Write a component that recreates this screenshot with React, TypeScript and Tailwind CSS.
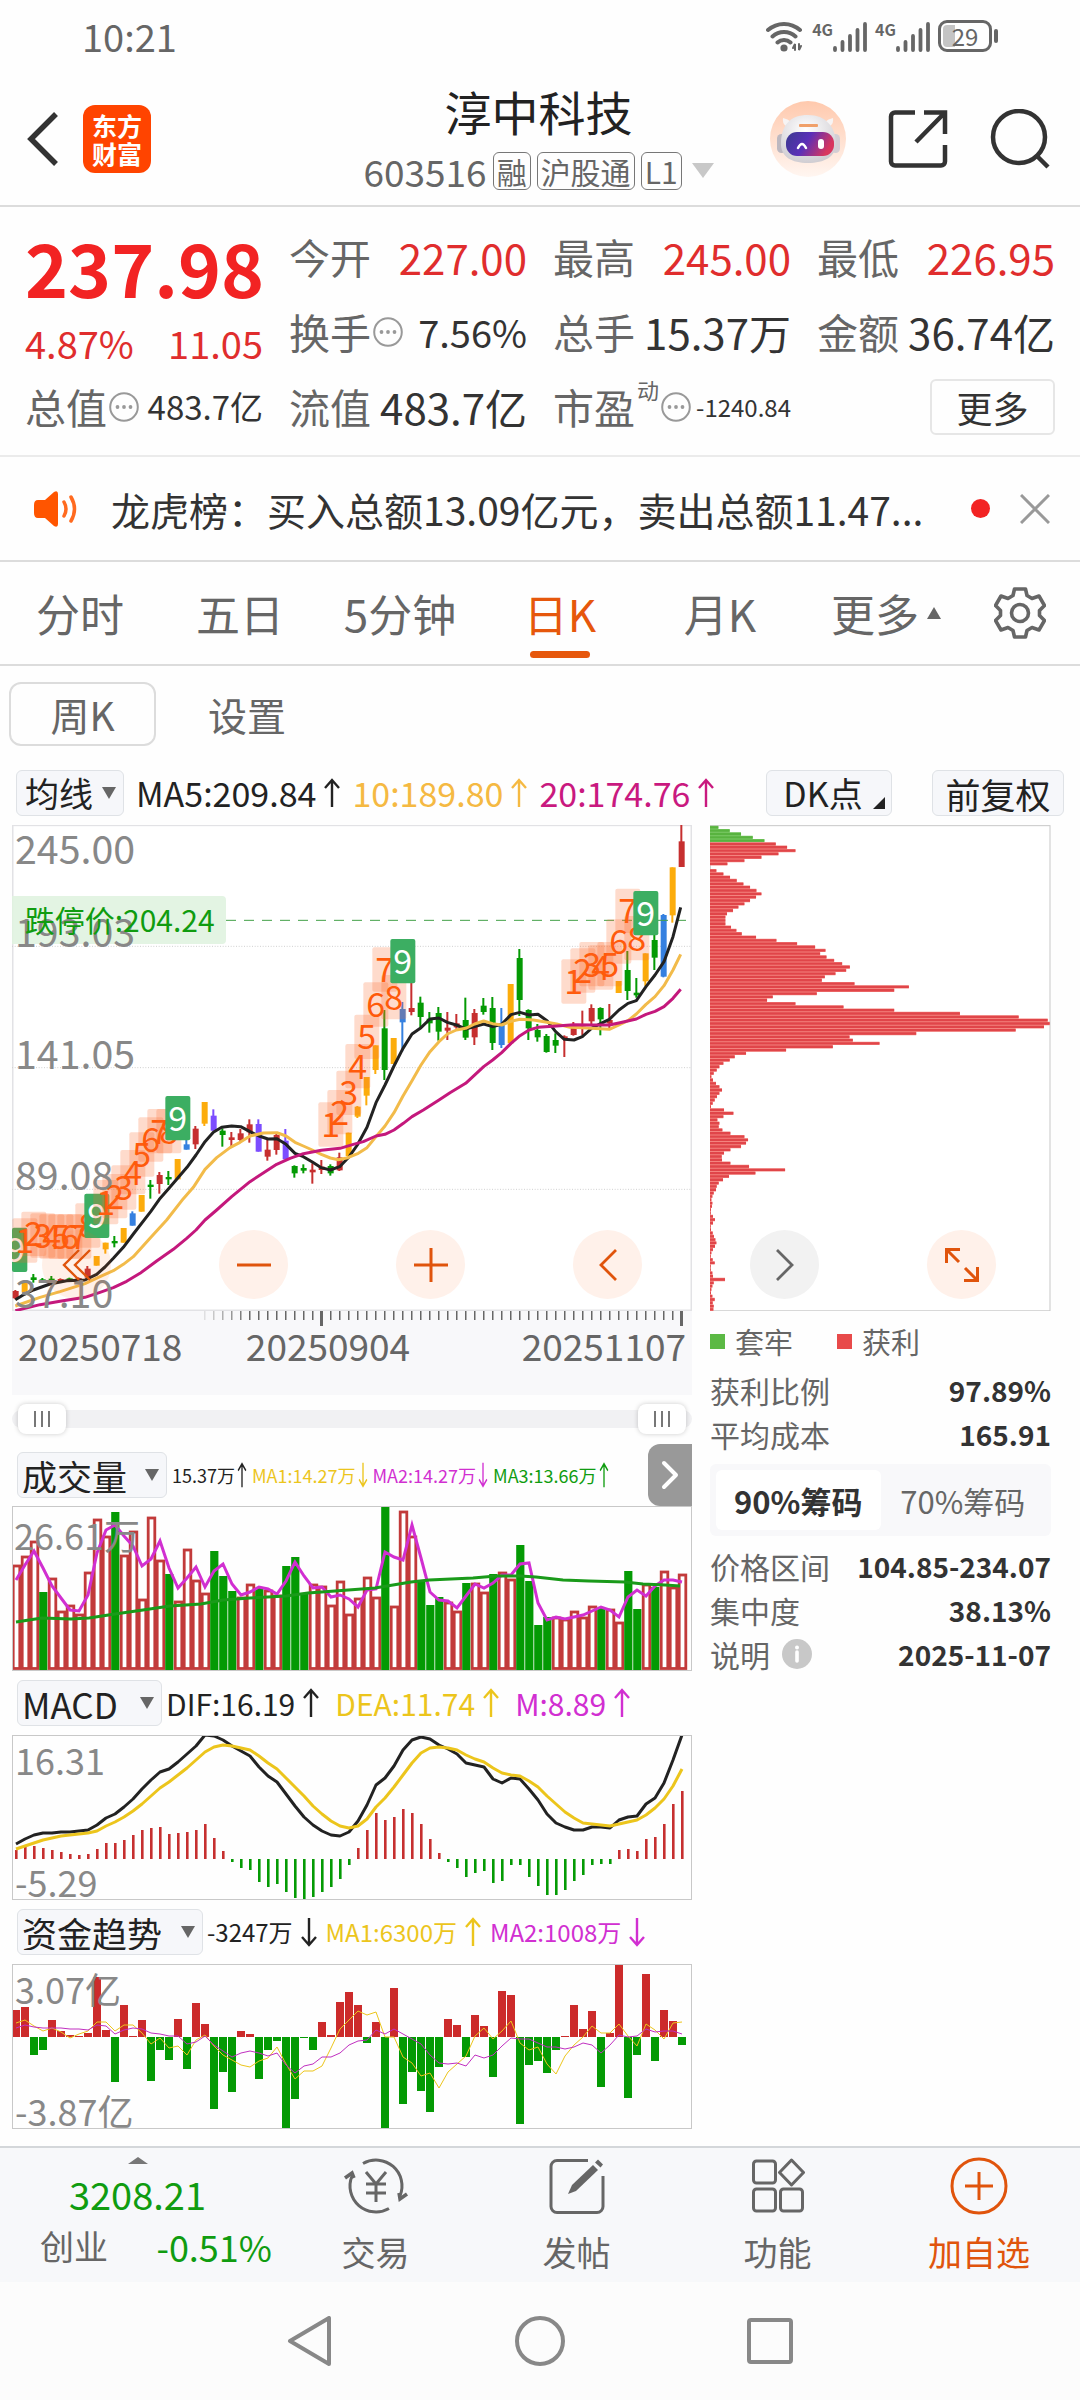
import { useState, type ReactNode } from 'react';
import clsx from 'clsx';

// candle: [kind, body top, body bottom, wick top, wick bottom]
type Kind = 'r' | 'g' | 'y' | 'b' | 'p';
type Candle = [Kind, number, number, number, number];

const kindFill: Record<Kind, string> = {
  r: '#c62f2f',
  g: '#049a04',
  y: '#fcac0c',
  b: '#3580e0',
  p: '#7c4dff',
};

const candles: Candle[] = [
  ['r', 1443, 1465, 1440, 1468], ['y', 1418, 1446, 1418, 1446], ['g', 1402, 1410, 1392, 1418], ['g', 1408, 1414, 1404, 1416],
  ['g', 1406, 1413, 1398, 1416], ['r', 1407, 1413, 1405, 1415], ['g', 1405, 1412, 1403, 1414], ['r', 1404, 1410, 1402, 1412],
  ['r', 1376, 1403, 1368, 1406], ['y', 1338, 1367, 1338, 1367], ['y', 1298, 1318, 1298, 1331], ['g', 1293, 1300, 1278, 1312],
  ['y', 1254, 1298, 1254, 1298], ['b', 1210, 1247, 1204, 1247], ['y', 1155, 1205, 1155, 1205], ['g', 1124, 1131, 1110, 1166],
  ['r', 1095, 1122, 1086, 1151], ['g', 1101, 1108, 1083, 1125], ['y', 1047, 1108, 1047, 1108], ['b', 1003, 1019, 985, 1019],
  ['r', 956, 1003, 948, 1017], ['y', 876, 941, 876, 948], ['p', 917, 962, 898, 962], ['g', 962, 975, 955, 1010],
  ['r', 982, 990, 966, 1010], ['r', 970, 990, 957, 998], ['r', 943, 967, 928, 998], ['p', 942, 1025, 928, 1025],
  ['r', 1019, 1040, 990, 1052], ['r', 975, 1020, 970, 1034], ['p', 992, 1048, 957, 1048], ['g', 1068, 1090, 1066, 1103],
  ['g', 1074, 1082, 1063, 1090], ['r', 1079, 1087, 1060, 1121], ['r', 1070, 1080, 1050, 1092], ['g', 1068, 1090, 1063, 1097],
  ['r', 1042, 1081, 1028, 1083], ['y', 968, 1038, 968, 1038], ['y', 890, 920, 888, 924], ['y', 801, 857, 801, 886],
  ['y', 706, 780, 706, 792], ['g', 655, 780, 600, 810], ['y', 684, 762, 684, 762], ['b', 597, 637, 576, 724],
  ['r', 594, 606, 515, 616], ['g', 578, 621, 560, 652], ['g', 626, 640, 606, 668], ['g', 609, 665, 591, 692],
  ['r', 653, 662, 606, 690], ['r', 640, 652, 612, 656], ['g', 630, 683, 563, 690], ['r', 609, 682, 597, 705],
  ['g', 587, 606, 564, 614], ['g', 594, 699, 561, 720], ['b', 640, 705, 594, 714], ['y', 522, 700, 522, 700],
  ['g', 444, 570, 417, 618], ['g', 600, 655, 598, 690], ['g', 660, 682, 642, 695], ['g', 678, 726, 672, 728],
  ['g', 690, 707, 670, 729], ['r', 679, 685, 676, 741], ['r', 645, 675, 636, 677], ['r', 650, 656, 602, 676],
  ['r', 594, 634, 583, 645], ['g', 594, 628, 592, 676], ['r', 630, 640, 582, 655], ['y', 513, 549, 513, 549],
  ['g', 480, 543, 423, 570], ['g', 548, 556, 504, 563], ['y', 430, 514, 430, 528], ['g', 390, 443, 370, 480],
  ['b', 315, 500, 312, 502], ['y', 172, 316, 172, 338], ['r', 94, 171, 45, 171],
];

const ma5 =
  '46,1469 73,1453 100,1440 150,1422 200,1412 255,1410 290,1393 315,1371 340,1345 370,1312 400,1272 452,1205 478,1168 507,1135 534,1103 561,1072 588,1035 615,995 640,967 665,952 695,948 722,950 750,965 777,978 804,987 831,986 858,1003 885,1030 910,1040 937,1056 964,1073 991,1080 1019,1070 1046,1042 1072,1005 1101,952 1128,878 1155,825 1182,768 1209,715 1236,672 1263,653 1290,627 1317,624 1342,637 1369,645 1397,657 1424,650 1451,642 1478,650 1505,643 1533,614 1560,607 1587,615 1614,613 1641,632 1667,665 1693,688 1722,690 1747,680 1776,654 1803,640 1828,628 1857,600 1884,580 1909,572 1938,530 1965,495 1992,455 2019,380 2042,292';
const ma10 =
  '46,1488 120,1462 180,1445 255,1421 300,1400 340,1382 370,1363 400,1340 450,1285 500,1230 550,1166 580,1132 615,1078 650,1043 690,1013 720,997 750,978 790,969 831,968 858,978 885,997 910,1008 937,1020 964,1033 991,1044 1015,1049 1040,1044 1075,1030 1101,1013 1128,980 1155,948 1182,908 1209,858 1236,812 1263,765 1290,725 1317,695 1342,672 1369,660 1397,655 1424,642 1451,633 1478,641 1505,645 1533,634 1560,628 1600,630 1641,637 1670,642 1710,652 1747,653 1800,656 1828,658 1857,645 1884,632 1909,612 1938,583 1965,560 1992,527 2019,480 2042,433';
const ma20 =
  '46,1502 120,1484 180,1474 255,1462 300,1447 340,1433 380,1414 420,1390 470,1353 520,1318 560,1285 588,1260 615,1230 650,1200 695,1160 750,1115 800,1082 830,1063 870,1045 910,1031 964,1021 1020,1015 1060,1003 1090,995 1128,978 1155,973 1182,960 1210,940 1236,920 1270,900 1317,870 1350,848 1397,820 1451,770 1478,750 1505,728 1533,700 1560,677 1587,660 1614,652 1670,648 1722,644 1780,645 1828,645 1860,638 1909,627 1938,613 1965,604 1992,590 2019,565 2042,538';

// nine-turn counts: first candle index and the top of each box
const turns: { start: number; tops: number[] }[] = [
  { start: 1, tops: [1225, 1205, 1210, 1213, 1213, 1213, 1213, 1180, 1151] },
  { start: 10, tops: [1110, 1092, 1066, 1020, 967, 922, 897, 897, 858] },
  { start: 35, tops: [877, 840, 782, 702, 614, 517, 412, 495, 387] },
  { start: 62, tops: [448, 415, 396, 406, 396, 328, 236, 318, 243] },
];

const chips = [
  87, 121, 155, 190, 225, 259, 293, 318, 267, 216, 165, 114, 62, 81, 102, 122, 142, 162, 182, 201, 216, 200, 182, 165, 147,
  131, 113, 108, 108, 108, 125, 141, 157, 200, 261, 323, 377, 408, 392, 411, 434, 458, 481, 470, 438, 406, 397, 495, 658,
  614, 382, 250, 233, 318, 462, 614, 811, 987, 1074, 1080, 1063, 978, 680, 480, 490, 570, 430, 290, 170, 136, 121, 102, 90,
  82, 73, 66, 71, 80, 90, 98, 90, 83, 76, 70, 65, 104, 132, 102, 84, 90, 88, 99, 123, 165, 176, 170, 155, 123, 104, 97, 98,
  123, 179, 287, 198, 119, 101, 88, 82, 80, 73, 69, 66, 69, 68, 65, 64, 71, 77, 71, 64, 65, 70, 74, 78, 81, 77, 71, 66, 64,
  70, 76, 64, 64, 69, 71, 107, 73, 69, 66, 65, 69, 76, 70, 73, 72,
];

// positive bars closed up, negative bars closed down
const volume = [
  104, 113, 128, -78, 91, 58, 64, 55, 97, 150, 133, -158, 114, 138, 70, 152, 109, -96, 68, 120, 89, 76, -119, -94, -79, 72,
  85, -82, 79, 74, -104, -113, -77, 85, 83, 64, 88, 55, 71, 92, 72, -163, 63, 158, 133, -90, -65, -73, 67, 58, -87, 86, 77,
  -96, 97, 90, -125, -89, -45, -53, 52, 50, 58, 52, 63, -62, 60, 47, -99, -61, 85, -83, 98, 82, 95,
];
const volumeMa = [
  74, 59, 45, 62, 80, 92, 104, 105, 89, 47, 24, 19, 30, 40, 60, 53, 35, 62, 82, 72, 61, 81, 65, 58, 78, 89, 86, 81, 83, 88,
  75, 56, 70, 82, 81, 91, 89, 93, 101, 84, 83, 46, 51, 54, 19, 52, 86, 94, 95, 102, 90, 78, 82, 77, 69, 69, 58, 57, 97, 114,
  111, 113, 111, 109, 105, 101, 104, 111, 91, 84, 90, 80, 74, 74, 76,
];
const volumeTrend =
  '4,116 30,112 59,113 77,112 103,108 131,104 158,100 189,98 211,94 238,92 274,90 296,87 323,85 363,82 399,76 417,74 461,72 484,70 508,70 524,71 551,74 577,75 613,76 631,78 653,79 668,80';

const macd = [
  9, 12, 13, 11, 9, 7, 5, 4, 5, 10, 16, 16, 19, 24, 29, 31, 32, 25, 26, 27, 29, 35, 21, 8, -3, -9, -11, -23, -28, -25, -33,
  -39, -41, -38, -33, -28, -20, -6, 11, 29, 46, 39, 42, 50, 46, 35, 20, 6, -3, -9, -18, -14, -12, -24, -22, -6, -6, -18,
  -27, -36, -36, -31, -22, -16, -6, -5, -5, 9, 10, 8, 20, 22, 35, 55, 68,
];
const dif = [
  109, 104, 100, 98, 98, 97, 97, 96, 95, 90, 83, 79, 72, 64, 54, 45, 37, 34, 27, 19, 11, 0, 1, 5, 11, 16, 21, 32, 41, 47,
  59, 71, 82, 90, 96, 100, 101, 97, 86, 70, 50, 43, 31, 15, 5, 2, 4, 10, 14, 19, 28, 30, 32, 44, 48, 43, 44, 54, 65, 79, 88,
  92, 95, 95, 92, 92, 93, 85, 82, 81, 69, 63, 48, 25, 0,
];
const dea = [
  114, 111, 108, 105, 103, 101, 100, 99, 98, 96, 91, 87, 82, 76, 69, 61, 53, 47, 40, 33, 25, 17, 12, 10, 11, 13, 15, 21, 28,
  34, 43, 52, 61, 71, 79, 86, 91, 93, 91, 84, 72, 63, 52, 40, 28, 18, 13, 12, 13, 15, 20, 24, 27, 33, 38, 40, 41, 46, 52,
  61, 69, 77, 83, 88, 89, 90, 91, 89, 87, 85, 80, 73, 64, 51, 34,
];

const funds = [
  27, 30, -18, -13, 17, 6, 2, 1, 4, 60, 7, -45, 32, 1, 17, -44, -13, -23, 18, -32, 34, 13, -72, -35, -55, 6, 3, -42, -13,
  -4, -91, -62, -1, -13, 15, 2, 35, 45, 32, -6, 15, -92, 49, -67, -35, -54, -75, -30, 18, 12, -20, 22, 11, -40, 46, 42, -87,
  -28, -24, -36, -13, 1, 32, 8, 26, -50, 4, 73, -61, -18, 63, -24, 27, 16, -8,
];
const fundsMa1 = [
  59, 56, 62, 67, 64, 68, 74, 70, 67, 58, 58, 67, 61, 61, 69, 80, 74, 84, 82, 91, 76, 71, 82, 91, 96, 101, 103, 97, 94, 83,
  100, 115, 107, 107, 102, 84, 65, 56, 47, 51, 48, 73, 73, 93, 99, 112, 109, 124, 108, 100, 92, 72, 64, 75, 67, 57, 79, 86,
  83, 100, 110, 92, 81, 73, 62, 69, 69, 60, 72, 82, 60, 66, 75, 59, 58,
];
const fundsMa2 = [
  64, 61, 63, 64, 64, 64, 65, 65, 66, 61, 62, 70, 66, 64, 65, 69, 70, 72, 72, 80, 78, 72, 81, 87, 93, 89, 87, 89, 92, 89,
  101, 109, 102, 100, 93, 93, 89, 81, 77, 76, 66, 70, 65, 70, 75, 80, 91, 99, 100, 99, 102, 91, 94, 91, 82, 74, 75, 75, 79,
  83, 83, 85, 83, 79, 81, 89, 81, 71, 73, 72, 65, 68, 67, 67, 70,
];

const toPoints = (ys: number[]) => ys.map((y, i) => `${4 + i * 9},${y}`).join(' ');

function Triangle({ up, className }: { up?: boolean; className?: string }) {
  return (
    <svg viewBox="0 0 14 12" className={clsx('w-3.5 shrink-0', className)} fill="currentColor" aria-hidden="true">
      <path d={up ? 'M7 0l7 12H0z' : 'M0 0h14L7 12z'} />
    </svg>
  );
}

function Arrow({ down, small }: { down?: boolean; small?: boolean }) {
  return (
    <svg
      viewBox="0 0 18 30"
      className={clsx('shrink-0', small ? 'h-[26px] w-[10px]' : 'h-[30px] w-[18px]')}
      preserveAspectRatio="none"
      fill="none"
      stroke="currentColor"
      strokeWidth="2.4"
      aria-label={down ? '下降' : '上升'}
    >
      <path d={down ? 'M9 1v27M2 20l7 8 7-8' : 'M9 29V2M2 10l7-8 7 8'} />
    </svg>
  );
}

function Dots() {
  return (
    <svg viewBox="0 0 30 30" className="w-[30px] shrink-0" aria-hidden="true">
      <circle cx="15" cy="15" r="13.8" fill="none" stroke="#999" strokeWidth="2" />
      <g fill="#999">
        <circle cx="8.500" cy="15" r="1.9" />
        <circle cx="15" cy="15" r="1.9" />
        <circle cx="21.500" cy="15" r="1.9" />
      </g>
    </svg>
  );
}

function Picker({ label, options, className }: { label: string; options: string[]; className: string }) {
  return (
    <label className="relative flex shrink-0 items-center text-[#666]">
      <select
        aria-label={label}
        className={clsx('h-[46px] appearance-none rounded-md border border-[#dfe2e6] bg-[#f6f7fa] text-[#222]', className)}
      >
        {options.map(o => (
          <option key={o}>{o}</option>
        ))}
      </select>
      <Triangle className="pointer-events-none absolute right-2" />
    </label>
  );
}

function Signal() {
  return (
    <div className="flex items-start">
      <span className="text-[16px] leading-none font-bold">4G</span>
      <svg viewBox="0 0 34 30" className="mt-px w-[34px]" stroke="#666" strokeWidth="3.8" strokeLinecap="round">
        <path d="M2 26v2M9.500 20v8M17 14v14M24.500 8v20M32 2v26" />
      </svg>
    </div>
  );
}

function StatusBar() {
  return (
    <div className="flex h-18 items-center justify-between px-[82px] text-[#666]">
      <span className="text-[38px] leading-none">10:21</span>
      <div className="flex items-center gap-2">
        <svg viewBox="0 0 38 32" className="w-[38px]" fill="none" stroke="#666" strokeWidth="4" strokeLinecap="round" aria-label="WiFi">
          <path d="M2 10a24 24 0 0 1 32 0M6.500 16.500a17 17 0 0 1 23 0M11.500 22.500a9.500 9.500 0 0 1 13 0" />
          <circle cx="18" cy="28" r="1.6" fill="#666" />
          <path d="M27 28l2-4v6M35 26l-2 4v-6" strokeWidth="2" />
        </svg>
        <Signal />
        <Signal />
        <div className="flex items-center gap-[2px]">
          <div className="relative flex h-8 w-[54px] items-center justify-center overflow-hidden rounded-[9px] border-[3px] border-[#666]">
            <div className="absolute inset-y-[2px] left-[2px] w-3 rounded-l bg-[#c4c4c4]" />
            <span className="relative text-[24px] leading-none">29</span>
          </div>
          <div className="h-[14px] w-[4px] rounded bg-[#666]" />
        </div>
      </div>
    </div>
  );
}

function Robot() {
  return (
    <svg viewBox="0 0 76 76" className="w-[76px]" aria-hidden="true">
      <defs>
        <linearGradient id="halo" x1="0" y1="0" x2="0" y2="1">
          <stop offset="0" stopColor="#ffc9ad" />
          <stop offset="1" stopColor="#fff6f1" />
        </linearGradient>
        <linearGradient id="visor" x1="0" y1="0" x2="1" y2="0.3">
          <stop offset="0" stopColor="#3b3a8f" />
          <stop offset="0.5" stopColor="#5a2fb8" />
          <stop offset="1" stopColor="#d8365e" />
        </linearGradient>
        <radialGradient id="shell" cx="0.45" cy="0.3" r="0.8">
          <stop offset="0" stopColor="#ffffff" />
          <stop offset="1" stopColor="#c9c6cc" />
        </radialGradient>
      </defs>
      <circle cx="38" cy="38" r="38" fill="url(#halo)" />
      <path d="M16 25q-4-3-3-8 5 1 8 4zM60 25q4-3 3-8-5 1-8 4z" fill="#f7f4f4" />
      <rect x="7" y="33" width="9" height="19" rx="4.500" fill="#bdb8c0" />
      <rect x="61" y="33" width="9" height="19" rx="4.500" fill="#d3ced4" />
      <path d="M38 14c18 0 27 12 28 27 1 15-12 21-28 21S10 56 11 41c1-17 9-27 27-27z" fill="url(#shell)" />
      <rect x="16" y="31" width="48" height="24" rx="11" fill="url(#visor)" />
      <path d="M28 47q4-8 8 0" fill="none" stroke="#fff" strokeWidth="2.500" strokeLinecap="round" />
      <rect x="48" y="38" width="6" height="10" rx="3" fill="#fff" />
      <rect x="29" y="23" width="19" height="3" rx="1" fill="#f0a06a" />
    </svg>
  );
}

function Header() {
  return (
    <header className="grid h-[135px] grid-cols-[1fr_auto_1fr] items-center border-b-2 border-[#dcdcdc] pr-[30px] pl-[27px]">
      <div className="flex items-center gap-6">
        <button aria-label="返回">
          <svg viewBox="0 0 32 54" className="w-8" fill="none" stroke="#333" strokeWidth="5.500">
            <path d="M29 2L4 27l25 25" />
          </svg>
        </button>
        <a href="#home" className="flex size-17 flex-col items-center justify-center rounded-xl bg-[#ff4400] text-[25px] leading-[28px] font-bold text-white">
          <span>东方</span>
          <span>财富</span>
        </a>
      </div>
      <div className="flex flex-col items-center gap-1">
        <h1 className="text-[47px] leading-[60px] text-[#222]">淳中科技</h1>
        <button className="flex items-center gap-[6px] text-[#666]">
          <span className="text-[37px] leading-[52px]">603516</span>
          {['融', '沪股通', 'L1'].map(tag => (
            <span key={tag} className="rounded-md border border-[#777] px-[3px] text-[30px] leading-[36px]">
              {tag}
            </span>
          ))}
          <svg viewBox="0 0 22 15" className="ml-1 w-[22px]" fill="#c8c8c8" aria-hidden="true">
            <path d="M0 0h22L11 15z" />
          </svg>
        </button>
      </div>
      <div className="flex items-center justify-end gap-[42px]">
        <button aria-label="智能助手">
          <Robot />
        </button>
        <button aria-label="分享">
          <svg viewBox="0 0 60 60" className="w-[60px]" fill="none" stroke="#333" strokeWidth="4.500">
            <path d="M27 3.500H7a4 4 0 0 0-4 4v45a4 4 0 0 0 4 4h46a4 4 0 0 0 4-4V36M36 3.500h21V25M57 3.500L28 33" />
          </svg>
        </button>
        <button aria-label="搜索">
          <svg viewBox="0 0 60 60" className="w-[60px]" fill="none" stroke="#333" strokeWidth="4.500">
            <circle cx="29" cy="28" r="26" />
            <path d="M47 47l11 11" />
          </svg>
        </button>
      </div>
    </header>
  );
}

function Stat({ label, value, extra, size = 'text-[42px]' }: { label: string; value: string; extra?: ReactNode; size?: string }) {
  return (
    <div className="flex items-center justify-between whitespace-nowrap">
      <div className="flex items-center gap-[2px] text-[41px] leading-none text-[#666]">
        {label}
        {extra}
      </div>
      <span className={clsx('leading-none', size)}>{value}</span>
    </div>
  );
}

function Quote() {
  return (
    <section className="grid grid-cols-4 grid-rows-[75px_75px_75px] gap-x-[26px] border-b-2 border-[#ebebeb] px-[25px] pt-3 pb-[11px] text-[#333]">
      <div className="row-span-2 text-[#e02d2d]">
        <div className="text-[73px] leading-[94px] font-bold text-[#f22323]">237.98</div>
        <div className="flex justify-between text-[38px] leading-[60px]">
          <span>4.87%</span>
          <span>11.05</span>
        </div>
      </div>
      <Stat label="今开" value="227.00" size="text-[42px] text-[#e02d2d]" />
      <Stat label="最高" value="245.00" size="text-[42px] text-[#e02d2d]" />
      <Stat label="最低" value="226.95" size="text-[42px] text-[#e02d2d]" />
      <Stat label="换手" value="7.56%" extra={<Dots />} size="text-[38px]" />
      <Stat label="总手" value="15.37万" />
      <Stat label="金额" value="36.74亿" />
      <Stat label="总值" value="483.7亿" extra={<Dots />} size="text-[33px]" />
      <Stat label="流值" value="483.7亿" />
      <Stat
        label="市盈"
        value="-1240.84"
        size="text-[24px]"
        extra={
          <>
            <span className="-mt-9 text-[22px]">动</span>
            <Dots />
          </>
        }
      />
      <button className="h-14 w-[125px] place-self-center justify-self-end rounded-md border-2 border-[#e6e6e6] text-[36px] leading-none">
        更多
      </button>
    </section>
  );
}

function NewsBar() {
  return (
    <section className="flex h-[105px] items-center border-b-2 border-[#dcdcdc] pr-[30px] pl-[34px]">
      <svg viewBox="0 0 44 36" className="w-11 shrink-0" aria-hidden="true">
        <path d="M4 9h7L20 1q4-2 4 2v30q0 4-4 2l-9-8H4q-4 0-4-5v-8q0-5 4-5z" fill="#ff5500" />
        <path d="M30 11q4 7 0 14M37 6q7 12 0 24" fill="none" stroke="#ff6a1f" strokeWidth="3.500" strokeLinecap="round" />
      </svg>
      <a href="#news" className="ml-[33px] min-w-0 flex-1 truncate text-[39px] leading-[52px] text-[#333]">
        龙虎榜：买入总额13.09亿元，卖出总额11.47...
      </a>
      <span className="ml-6 size-[19px] rounded-full bg-[#f22323]" />
      <button aria-label="关闭" className="ml-[30px]">
        <svg viewBox="0 0 30 30" className="w-[30px]" stroke="#999" strokeWidth="3">
          <path d="M1 1l28 28M29 1L1 29" />
        </svg>
      </button>
    </section>
  );
}

const periods = ['分时', '五日', '5分钟', '日K', '月K', '更多'];

function Periods() {
  const [active, setActive] = useState('日K');
  return (
    <nav className="grid h-[104px] grid-cols-[repeat(6,4fr)_3fr] border-b-2 border-[#dcdcdc] text-[#666]">
      {periods.map(p => (
        <button
          key={p}
          onClick={() => setActive(p)}
          className={clsx(
            'relative flex items-center justify-center gap-2 text-[44px] leading-none whitespace-nowrap',
            p === active && 'text-[#e6570c]',
            p === '更多' && 'pl-3',
          )}
        >
          {p}
          {p === '更多' && <Triangle up />}
          {p === active && <span className="absolute bottom-[6px] h-[7px] w-15 rounded-sm bg-[#e6570c]" />}
        </button>
      ))}
      <button aria-label="图表设置" className="flex items-center justify-center">
        <svg viewBox="0 0 52 52" className="w-13" fill="none" stroke="#666" strokeWidth="3.600" strokeLinejoin="round">
          <path d="M20.500 2h11l1.500 6.500 5 3 7-2.500 5.500 9.500-5 5v5l5 5-5.500 9.500-7-2.500-5 3L31.500 50h-11L19 43.500l-5-3L7 43l-5.500-9.500 5-5v-5l-5-5L7 9l7 2.500 5-3z" />
          <circle cx="26" cy="26" r="8.500" />
        </svg>
      </button>
    </nav>
  );
}

function Reading({ color, children, down }: { color: string; children: ReactNode; down?: boolean }) {
  return (
    <span className={clsx('flex items-center gap-[7px] whitespace-nowrap', color)}>
      {children}
      <Arrow down={down} />
    </span>
  );
}

function MaRow() {
  return (
    <div className="mt-6 flex h-[46px] items-center pr-4 pl-4 text-[34px] leading-none">
      <Picker label="主图指标" options={['均线', '布林']} className="w-[108px] pl-2 text-[34px]" />
      <div className="ml-3 flex gap-[11px]">
        <Reading color="text-[#222]">MA5:209.84</Reading>
        <Reading color="text-[#f5b942]">10:189.80</Reading>
        <Reading color="text-[#c9197f]">20:174.76</Reading>
      </div>
      <button className="relative ml-auto h-[46px] w-[126px] rounded-md border border-[#dfe2e6] bg-[#f6f7fa] pr-3 text-[#222]">
        DK点
        <svg viewBox="0 0 12 12" className="absolute right-[6px] bottom-[6px] w-3" fill="#222" aria-hidden="true">
          <path d="M12 0v12H0z" />
        </svg>
      </button>
      <button className="ml-10 h-[46px] w-[132px] rounded-md border border-[#dfe2e6] bg-[#f6f7fa] text-[35px] text-[#222]">前复权</button>
    </div>
  );
}

const circle = 'pointer-events-auto flex size-[69px] items-center justify-center rounded-full';

function KLine() {
  // x runs in thirds of a pixel, 27 per trading day
  const cx = (i: number) => 47 + i * 27;
  return (
    <div className="relative">
      <svg viewBox="36 45 2040 1458" className="block w-full" role="img" aria-label="日K线图">
        <rect x="38" y="46" width="2036" height="1455" fill="#fff" stroke="#e2e2e5" strokeWidth="5" />
        <g stroke="#cfcfcf" strokeWidth="3" strokeDasharray="3 5">
          <path d="M36 409H2074M36 773H2074M36 1138H2074" />
        </g>
        {candles.map(([kind, top, bottom, high, low], i) => (
          <g key={i} fill={kindFill[kind]}>
            <rect x={cx(i) - 4} y={high} width="6" height={low - high} />
            <rect x={cx(i) - 9} y={top} width="18" height={bottom - top} />
          </g>
        ))}
        <path d="M678 331H2060" stroke="#43a047" strokeWidth="3" strokeDasharray="30 24" />
        <g fill="none" strokeWidth="9" strokeLinejoin="round">
          <polyline points={ma5} stroke="#222" />
          <polyline points={ma10} stroke="#f2bb4a" />
          <polyline points={ma20} stroke="#c4187c" />
        </g>
        <g fontSize="102" textAnchor="middle">
          <rect x="36" y="1253" width="46" height="133" rx="6" fill="#3cae62" />
          <text x="47" y="1355" fill="#fff">9</text>
          {turns.map(({ start, tops }) =>
            tops.map((top, n) => (
              <g key={`${start}-${n}`}>
                <rect
                  x={cx(start + n) - 37}
                  y={top}
                  width="75"
                  height="133"
                  rx="6"
                  fill={n === 8 ? '#3cae62' : '#fc6a28'}
                  fillOpacity={n === 8 ? 1 : 0.24}
                />
                <text x={cx(start + n)} y={top + 104} fill={n === 8 ? '#fff' : '#ff5a0a'}>
                  {n + 1}
                </text>
              </g>
            )),
          )}
        </g>
        <path d="M36 258H666q12 0 12 12V390q0 12-12 12H36z" fill="#dff2df" fillOpacity="0.88" />
        <g fontSize="118" fill="#888">
          <text x="45" y="163">245.00</text>
          <text x="45" y="412">193.03</text>
          <text x="45" y="776">141.05</text>
          <text x="45" y="1140">89.08</text>
          <text x="45" y="1494">37.10</text>
        </g>
        <text x="74" y="366" fontSize="90" fill="#109c10">跌停价:204.24</text>
      </svg>
      <div className="pointer-events-none absolute right-[50px] bottom-3 left-[30px] flex justify-between text-[#e0540c]">
        <button aria-label="最早" className={clsx(circle, 'bg-[#ff6a1f]/10')}>
          <svg viewBox="0 0 30 32" className="w-[30px]" fill="none" stroke="currentColor" strokeWidth="2.400">
            <path d="M17 1L2 16l15 15M28 1L13 16l15 15" />
          </svg>
        </button>
        <button aria-label="缩小" className={clsx(circle, 'bg-[#fff1ea]')}>
          <svg viewBox="0 0 34 34" className="w-[34px]" stroke="currentColor" strokeWidth="3">
            <path d="M0 17h34" />
          </svg>
        </button>
        <button aria-label="放大" className={clsx(circle, 'bg-[#fff1ea]')}>
          <svg viewBox="0 0 34 34" className="w-[34px]" stroke="currentColor" strokeWidth="3">
            <path d="M0 17h34M17 0v34" />
          </svg>
        </button>
        <button aria-label="左移" className={clsx(circle, 'bg-[#fff1ea]')}>
          <svg viewBox="0 0 18 32" className="w-[18px]" fill="none" stroke="currentColor" strokeWidth="2.800">
            <path d="M17 1L2 16l15 15" />
          </svg>
        </button>
      </div>
    </div>
  );
}

function DateAxis() {
  const ticks = Array.from({ length: 54 }, (_, n) => n + 21);
  return (
    <div className="h-[84px] bg-[#f8f8fa] text-[37px] text-[#666]">
      <svg viewBox="0 0 680 16" className="block w-full" aria-hidden="true">
        {ticks.map(i => {
          const major = i === 34 || i === 74;
          return (
            <rect
              key={i}
              x={4 + i * 9 - (major ? 2 : 1)}
              y="0"
              width={major ? 3 : 1.5}
              height={major ? 15 : 9}
              fill="#666"
              opacity={i < 26 ? (i - 20) / 6 : 1}
            />
          );
        })}
      </svg>
      <div className="flex justify-between px-[6px] leading-[36px]">
        <span>20250718</span>
        <span className="mr-12">20250904</span>
        <span>20251107</span>
      </div>
    </div>
  );
}

const thumb =
  'pointer-events-none absolute inset-x-[6px] inset-y-0 m-0 appearance-none bg-transparent [&::-webkit-slider-thumb]:pointer-events-auto [&::-webkit-slider-thumb]:h-[30px] [&::-webkit-slider-thumb]:w-12 [&::-webkit-slider-thumb]:appearance-none [&::-webkit-slider-thumb]:rounded-lg [&::-webkit-slider-thumb]:bg-white [&::-webkit-slider-thumb]:bg-[linear-gradient(90deg,#777_0_2px,transparent_2px_7px,#777_7px_9px,transparent_9px_14px,#777_14px_16px)] [&::-webkit-slider-thumb]:bg-[length:16px_16px] [&::-webkit-slider-thumb]:bg-center [&::-webkit-slider-thumb]:bg-no-repeat [&::-webkit-slider-thumb]:shadow-[0_0_5px_rgba(0,0,0,0.2)]';

function RangeSlider() {
  return (
    <div className="relative mt-[9px] mb-[10px] flex h-[30px] items-center">
      <div className="h-[18px] w-full rounded-full bg-[#f1f1f3]" />
      <input type="range" aria-label="起始日期" defaultValue={0} className={thumb} />
      <input type="range" aria-label="结束日期" defaultValue={100} className={thumb} />
    </div>
  );
}

function Frame({ label, children }: { label: string; children: ReactNode }) {
  return (
    <svg viewBox="0 0 680 165" className="block w-full" role="img" aria-label={label}>
      {children}
      <rect x="0.5" y="0.5" width="679" height="164" fill="none" stroke="#c8c8c8" />
    </svg>
  );
}

function VolumeChart() {
  return (
    <Frame label="成交量图">
      {volume.map((v, i) =>
        v > 0 ? (
          <rect key={i} x={i * 9 + 1.2} y={164 - v} width="6.600" height={v - 1.5} fill="#fff" stroke="#c23a3a" strokeWidth="2.800" />
        ) : (
          <rect key={i} x={i * 9 + 0.2} y={164 + v} width="8.200" height={-v} fill="#049a04" />
        ),
      )}
      <g fill="none" strokeWidth="3">
        <polyline points={toPoints(volumeMa)} stroke="#d12fd1" />
        <polyline points={volumeTrend} stroke="#1a9a1a" />
      </g>
      <text x="2" y="44" fontSize="36" fill="#888">26.61万</text>
    </Frame>
  );
}

function MacdChart() {
  return (
    <Frame label="MACD图">
      {macd.map((v, i) => (
        <rect key={i} x={i * 9 + 3} y={v > 0 ? 124 - v : 124} width="2.600" height={Math.abs(v)} fill={v > 0 ? '#c62f2f' : '#049a04'} />
      ))}
      <g fill="none" strokeWidth="3" strokeLinejoin="round">
        <polyline points={toPoints(dif)} stroke="#222" />
        <polyline points={toPoints(dea)} stroke="#ecc51c" />
      </g>
      <g fontSize="36" fill="#888">
        <text x="3" y="40">16.31</text>
        <text x="3" y="162">-5.29</text>
      </g>
    </Frame>
  );
}

function FundsChart() {
  return (
    <Frame label="资金趋势图">
      {funds.map((v, i) => (
        <rect key={i} x={i * 9} y={v > 0 ? 73 - v : 73} width="8" height={Math.abs(v)} fill={v > 0 ? '#cc2b2b' : '#049a04'} />
      ))}
      <g fill="none" strokeWidth="1">
        <polyline points={toPoints(fundsMa1)} stroke="#ecc51c" />
        <polyline points={toPoints(fundsMa2)} stroke="#c02fc0" />
      </g>
      <g fontSize="36" fill="#888">
        <text x="3" y="40">3.07亿</text>
        <text x="3" y="162">-3.87亿</text>
      </g>
    </Frame>
  );
}

function ChipChart() {
  const rows = (from: number, to: number) =>
    chips
      .slice(from, to)
      .map((x, n) => `M62 ${52 + (from + n) * 9.965}H${x}`)
      .join('');
  return (
    <div className="relative">
      <svg viewBox="62 45 1022 1458" className="block w-full" role="img" aria-label="筹码分布">
        <rect x="63" y="47" width="1018" height="1454" fill="#fff" stroke="#c8c8c8" strokeWidth="3" />
        <path d={rows(0, 5)} stroke="#7cca68" strokeWidth="10" />
        <path d={rows(0, 5)} stroke="#58b33f" strokeWidth="7" />
        <path d={rows(5, chips.length)} stroke="#f4837e" strokeWidth="10" />
        <path d={rows(5, chips.length)} stroke="#e04549" strokeWidth="7" />
      </svg>
      <div className="absolute bottom-3 left-10 flex gap-[108px]">
        <button aria-label="右移" className={clsx(circle, 'bg-[#f2f2f2] text-[#666]')}>
          <svg viewBox="0 0 18 32" className="w-[18px]" fill="none" stroke="currentColor" strokeWidth="2.800">
            <path d="M1 1l15 15L1 31" />
          </svg>
        </button>
        <button aria-label="全屏" className={clsx(circle, 'bg-[#fff1ea] text-[#e0540c]')}>
          <svg viewBox="0 0 34 34" className="w-[34px]" fill="none" stroke="currentColor" strokeWidth="3">
            <path d="M15 1.500H1.500V15M2 2l12 12M19 32.500h13.500V19M32 32L20 20" />
          </svg>
        </button>
      </div>
    </div>
  );
}

function ChipRow({ label, value, info }: { label: string; value: string; info?: boolean }) {
  return (
    <div className="flex h-11 items-center justify-between whitespace-nowrap">
      <dt className="flex items-center gap-3 text-[30px] leading-none text-[#666]">
        {label}
        {info && (
          <svg viewBox="0 0 30 30" className="w-[30px]" aria-hidden="true">
            <circle cx="15" cy="15" r="15" fill="#c8c8c8" />
            <circle cx="15" cy="8.500" r="2" fill="#fff" />
            <path d="M15 13v9" stroke="#fff" strokeWidth="3.600" strokeLinecap="round" />
          </svg>
        )}
      </dt>
      <dd className="text-[28px] leading-none font-bold text-[#333]">{value}</dd>
    </div>
  );
}

function ChipPanel() {
  const [share, setShare] = useState('90%筹码');
  return (
    <aside>
      <ChipChart />
      <div className="mt-3 flex h-9 items-center gap-11 text-[29px] leading-none text-[#666]">
        <span className="flex items-center gap-[10px]">
          <i className="size-[15px] bg-[#5bb944]" />
          套牢
        </span>
        <span className="flex items-center gap-[10px]">
          <i className="size-[15px] bg-[#e84a4a]" />
          获利
        </span>
      </div>
      <dl className="mt-[9px]">
        <ChipRow label="获利比例" value="97.89%" />
        <ChipRow label="平均成本" value="165.91" />
      </dl>
      <div className="mt-2 flex h-[72px] rounded-md bg-[#f8f8fa] p-[6px]">
        {['90%筹码', '70%筹码'].map(s => (
          <button
            key={s}
            onClick={() => setShare(s)}
            className={clsx('flex-1 rounded-md text-[31px] leading-none whitespace-nowrap', s === share ? 'bg-white font-bold text-[#333]' : 'text-[#666]')}
          >
            {s}
          </button>
        ))}
      </div>
      <dl className="mt-2">
        <ChipRow label="价格区间" value="104.85-234.07" />
        <ChipRow label="集中度" value="38.13%" />
        <ChipRow label="说明" value="2025-11-07" info />
      </dl>
    </aside>
  );
}

function VolumeHeader() {
  return (
    <div className="flex h-[62px] items-center gap-[5px] pl-[5px] text-[18px] leading-none whitespace-nowrap">
      <Picker label="副图一" options={['成交量', '成交额']} className="w-[150px] pl-1 text-[35px]" />
      <span className="flex items-center gap-[2px] text-[#222]">15.37万<Arrow small /></span>
      <span className="flex items-center gap-[2px] text-[#ecc51c]">MA1:14.27万<Arrow small down /></span>
      <span className="flex items-center gap-[2px] text-[#d12fd1]">MA2:14.27万<Arrow small down /></span>
      <span className="flex items-center gap-[2px] text-[#109c10]">MA3:13.66万<Arrow small /></span>
      <button aria-label="展开" className="ml-auto flex h-full w-11 items-center justify-center rounded-l-xl bg-[#999]">
        <svg viewBox="0 0 18 30" className="w-[18px]" fill="none" stroke="#fff" strokeWidth="4" strokeLinecap="round" strokeLinejoin="round">
          <path d="M3 3l12 12L3 27" />
        </svg>
      </button>
    </div>
  );
}

function BottomBar() {
  return (
    <footer className="mt-[17px] grid h-[136px] grid-cols-[275fr_201fr_201fr_201fr_202fr] border-t-2 border-[#d4d7da] bg-[#f7f8fa] text-[34px] leading-none text-[#666]">
      <button className="flex flex-col items-center pt-[9px]">
        <svg viewBox="0 0 20 7" className="w-5" fill="#777" aria-hidden="true">
          <path d="M10 0l10 7H0z" />
        </svg>
        <span className="mt-2 text-[38px] leading-[44px] text-[#109c10]">3208.21</span>
        <span className="mt-[7px] flex w-full justify-between pr-[3px] pl-10 leading-[46px]">
          创业
          <span className="text-[36px] text-[#109c10]">-0.51%</span>
        </span>
      </button>
      <button className="flex flex-col items-center gap-[20px] pt-[9px]">
        <svg viewBox="0 0 66 58" className="h-[58px]" fill="none" stroke="#666" strokeWidth="3">
          <path d="M20 6.500A26 26 0 0 1 57 39M46 51.500A26 26 0 0 1 9 19" />
          <path d="M2 21l7-5 2 5M64 37l-7 5-1-6" strokeWidth="3.500" />
          <path d="M23 15l10 12 10-12M33 27v18M23 27h20M23 36h20" />
        </svg>
        交易
      </button>
      <button className="flex flex-col items-center gap-[20px] pt-[9px]">
        <svg viewBox="0 0 56 58" className="h-[58px]" fill="none" stroke="#666" strokeWidth="3">
          <path d="M39 3.500H8a6 6 0 0 0-6 6v40a6 6 0 0 0 6 6h40a6 6 0 0 0 6-6V19" />
          <path d="M19 37l4-9 21-20 5 5-22 21z" fill="#666" stroke="none" />
          <path d="M49 2.500l5 5-2.500 3-5.500-5z" fill="#666" stroke="none" />
        </svg>
        发帖
      </button>
      <button className="flex flex-col items-center gap-[20px] pt-[9px]">
        <svg viewBox="0 0 54 58" className="h-[58px]" fill="none" stroke="#666" strokeWidth="3">
          <rect x="2.500" y="4" width="22" height="22" rx="3" />
          <rect x="2.500" y="32" width="22" height="22" rx="3" />
          <rect x="29.500" y="32" width="22" height="22" rx="3" />
          <path d="M40.500 3l12 12.500-12 12.500-12-12.500z" strokeLinejoin="round" />
        </svg>
        功能
      </button>
      <button className="flex flex-col items-center gap-[20px] pt-[9px] text-[#e0540c]">
        <svg viewBox="0 0 58 58" className="h-[58px]" fill="none" stroke="currentColor" strokeWidth="3">
          <circle cx="29" cy="29" r="27" />
          <path d="M15 29h28M29 15v28" />
        </svg>
        加自选
      </button>
    </footer>
  );
}

function SystemNav() {
  return (
    <div className="flex h-[118px] items-center justify-center gap-[180px] bg-[#fcfcfc]">
      <button aria-label="系统返回">
        <svg viewBox="0 0 50 50" className="w-[50px]" fill="none" stroke="#888" strokeWidth="4" strokeLinejoin="round">
          <path d="M44 2v46L5 25z" />
        </svg>
      </button>
      <button aria-label="主屏幕">
        <svg viewBox="0 0 50 50" className="w-[50px]" fill="none" stroke="#888" strokeWidth="4">
          <circle cx="25" cy="25" r="23" />
        </svg>
      </button>
      <button aria-label="最近任务">
        <svg viewBox="0 0 50 50" className="w-[50px]" fill="none" stroke="#888" strokeWidth="4">
          <rect x="4" y="4" width="42" height="42" rx="2" />
        </svg>
      </button>
    </div>
  );
}

export default function App() {
  return (
    <div className="bg-[#fefefe] font-['Noto_Sans_CJK_SC',sans-serif]">
      <StatusBar />
      <Header />
      <Quote />
      <NewsBar />
      <Periods />
      <div className="flex items-center gap-[52px] px-[9px] pt-4 text-[39px] leading-none text-[#666]">
        <button className="h-16 w-[147px] rounded-xl border-2 border-[#dcdcdc]">周K</button>
        <button>设置</button>
      </div>
      <MaRow />
      <main className="mt-[9px] grid grid-cols-[680fr_341fr] items-start gap-[18px] pr-[29px] pl-3">
        <div className="min-w-0">
          <KLine />
          <DateAxis />
          <RangeSlider />
          <VolumeHeader />
          <VolumeChart />
          <div className="flex h-16 items-center gap-1 pl-[5px] text-[30px] leading-none">
            <Picker label="副图二" options={['MACD', 'KDJ']} className="w-[145px] pl-1 text-[35px]" />
            <div className="flex gap-[15px]">
              <Reading color="text-[#222]">DIF:16.19</Reading>
              <Reading color="text-[#ecc51c]">DEA:11.74</Reading>
              <Reading color="text-[#d12fd1]">M:8.89</Reading>
            </div>
          </div>
          <MacdChart />
          <div className="flex h-16 items-center gap-1 pl-[5px] text-[24px] leading-none">
            <Picker label="副图三" options={['资金趋势', '主力资金']} className="w-[186px] pl-1 text-[35px]" />
            <div className="flex gap-2">
              <Reading color="text-[#222]" down>-3247万</Reading>
              <Reading color="text-[#ecc51c]">MA1:6300万</Reading>
              <Reading color="text-[#d12fd1]" down>MA2:1008万</Reading>
            </div>
          </div>
          <FundsChart />
        </div>
        <ChipPanel />
      </main>
      <BottomBar />
      <SystemNav />
    </div>
  );
}
